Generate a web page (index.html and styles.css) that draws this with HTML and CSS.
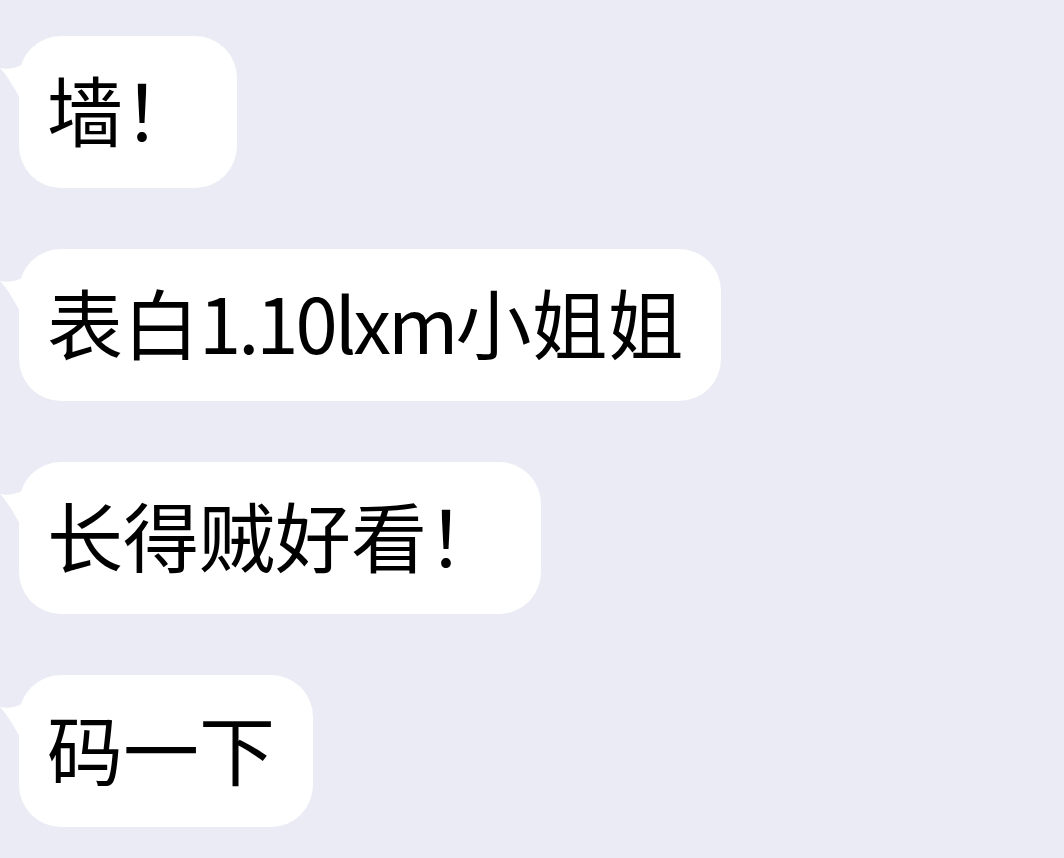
FILE: index.html
```html
<!DOCTYPE html>
<html lang="zh-CN">
<head>
<meta charset="utf-8">
<link rel="stylesheet" href="styles.css">
</head>
<body>
<div class="chat">
  <div class="bubble"><svg class="tail" viewBox="0 0 24 40" width="24" height="40"><path d="M24 4 C16 8 8 10 0 8 C6 14 12 24 20 38 L24 38 Z" fill="#fff"/></svg><span class="txt">墙！</span></div>
  <div class="bubble"><svg class="tail" viewBox="0 0 24 40" width="24" height="40"><path d="M24 4 C16 8 8 10 0 8 C6 14 12 24 20 38 L24 38 Z" fill="#fff"/></svg><span class="txt">表白<span class="latin">1.10lxm</span>小姐姐</span></div>
  <div class="bubble"><svg class="tail" viewBox="0 0 24 40" width="24" height="40"><path d="M24 4 C16 8 8 10 0 8 C6 14 12 24 20 38 L24 38 Z" fill="#fff"/></svg><span class="txt">长得贼好看！</span></div>
  <div class="bubble"><svg class="tail" viewBox="0 0 24 40" width="24" height="40"><path d="M24 4 C16 8 8 10 0 8 C6 14 12 24 20 38 L24 38 Z" fill="#fff"/></svg><span class="txt">码一下</span></div>
</div>
</body>
</html>
```
FILE: styles.css
```css
html, body {
  margin: 0;
  padding: 0;
  background: #ebebf5;
  height: 100%;
}
.chat {
  display: flex;
  flex-direction: column;
  align-items: flex-start;
  gap: 61px;
  padding: 36px 0 0 19px;
}
.bubble {
  position: relative;
  background: #fff;
  border-radius: 42px;
  height: 152px;
  display: flex;
  align-items: center;
  padding: 0 38px 8px 28px;
  box-sizing: border-box;
}
.tail {
  position: absolute;
  left: -19px;
  top: 24px;
}
.txt {
  font-family: "Noto Sans CJK SC", "Noto Sans", sans-serif;
  font-size: 76px;
  line-height: 1;
  color: #000;
  white-space: nowrap;
}
.latin {
  letter-spacing: -3px;
}
```
